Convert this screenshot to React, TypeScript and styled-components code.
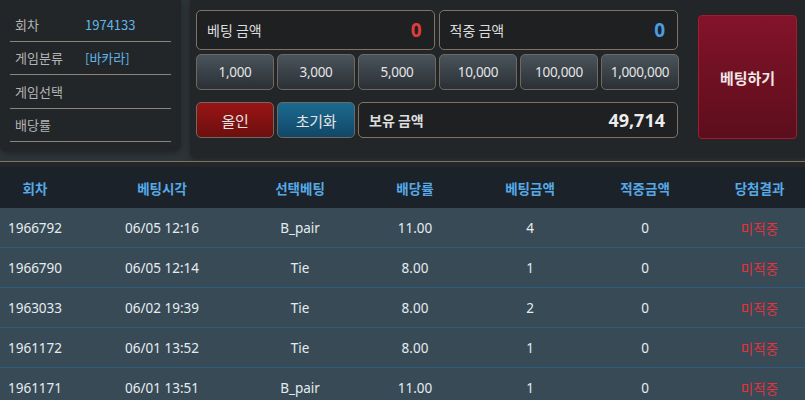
import React from "react";
import styled, { createGlobalStyle } from "styled-components";

const Global = createGlobalStyle`
  html, body { margin: 0; padding: 0; background: #2e3538; }
  body { font-family: "Noto Sans", "Noto Sans CJK KR", sans-serif; }
  * { box-sizing: border-box; }
`;

const Page = styled.div`
  width: 805px;
  height: 400px;
  overflow: hidden;
  background: #2e3538;
  display: flex;
  flex-direction: column;
`;

const Top = styled.div`
  height: 161px;
  flex-shrink: 0;
  display: flex;
  align-items: flex-start;
  gap: 9px;
`;

const InfoPanel = styled.div`
  width: 181px;
  height: 151px;
  background: #232628;
  border-radius: 0 0 6px 6px;
  box-shadow: 0 2px 6px rgba(0, 0, 0, 0.35);
  padding: 8px 10px 0;
  display: flex;
  flex-direction: column;
`;

const InfoRow = styled.div`
  height: 33.5px;
  display: flex;
  align-items: center;
  border-bottom: 1px solid #8a847a;
  font-size: 13px;
  font-family: "Noto Sans CJK KR", "Noto Sans", sans-serif;
`;

const InfoLabel = styled.span`
  width: 75px;
  padding-left: 5px;
  color: #b4b4b4;
`;

const InfoValue = styled.span`
  color: #5fb6e6;
`;

const BetPanel = styled.div`
  flex: 1;
  height: 158px;
  background: #232628;
  border-radius: 0 0 0 6px;
  box-shadow: 0 2px 6px rgba(0, 0, 0, 0.35);
  padding: 10px 8px 0 6px;
  display: flex;
  gap: 19px;
`;

const Controls = styled.div`
  width: 483px;
  display: flex;
  flex-direction: column;
`;

const Row = styled.div<{ $mt?: number; $h: number }>`
  display: flex;
  gap: 3px;
  height: ${(p) => p.$h}px;
  margin-top: ${(p) => p.$mt ?? 0}px;
`;

const AmountBox = styled.div<{ $w: number }>`
  width: ${(p) => p.$w}px;
  height: 100%;
  border: 1px solid #7d7466;
  border-radius: 5px;
  background: #1e2022;
  display: flex;
  align-items: center;
  justify-content: space-between;
  padding: 0 12px 0 10px;
  margin-right: 1px;
`;

const AmountLabel = styled.span<{ $bold?: boolean }>`
  font-family: "Noto Sans CJK KR", "Noto Sans", sans-serif;
  font-size: 14px;
  color: #dcdcdc;
  font-weight: ${(p) => (p.$bold ? 700 : 400)};
`;

const AmountValue = styled.span<{ $color: string; $size: number }>`
  font-family: "Noto Sans", sans-serif;
  font-weight: 700;
  font-size: ${(p) => p.$size}px;
  color: ${(p) => p.$color};
`;

const Chip = styled.button<{ $variant?: "red" | "blue" }>`
  width: 78px;
  height: 100%;
  border-radius: 5px;
  border: 1px solid #6f695f;
  background: ${(p) =>
    p.$variant === "red"
      ? "linear-gradient(#9a1414, #6c0f0f)"
      : p.$variant === "blue"
      ? "linear-gradient(#1b6a90, #114766)"
      : "linear-gradient(#4a545c, #2a3035)"};
  color: #e4e4e4;
  font-family: "Noto Sans", "Noto Sans CJK KR", sans-serif;
  font-size: ${(p) => (p.$variant ? 15 : 13.5)}px;
  letter-spacing: -0.3px;
  padding: 0;
  cursor: pointer;
`;

const BetButton = styled.button`
  margin-top: 5px;
  width: 99px;
  height: 124px;
  border-radius: 4px;
  border: 1px solid #a31b2c;
  background: linear-gradient(#83132a, #5c0e1c);
  color: #f3e6e6;
  font-family: "Noto Sans CJK KR", sans-serif;
  font-weight: 700;
  font-size: 15px;
  cursor: pointer;
`;

const TableWrap = styled.div`
  flex: 1;
  border-top: 1px solid #7a746a;
  background: #252628;
  padding-top: 5px;
`;

const cols = "70px 184px 92px 138px 92px 138px 1fr";

const HeadRow = styled.div`
  display: grid;
  grid-template-columns: ${cols};
  height: 41px;
  align-items: center;
  background: #1c2229;
`;

const HeadCell = styled.div`
  text-align: center;
  font-family: "Noto Sans CJK KR", sans-serif;
  font-weight: 700;
  font-size: 13.5px;
  color: #56a9e6;
`;

const DataRow = styled.div`
  display: grid;
  grid-template-columns: ${cols};
  height: 40px;
  align-items: center;
  background: #384a55;
  border-bottom: 1px solid #2d5d7e;
`;

const Cell = styled.div<{ $red?: boolean }>`
  text-align: center;
  font-family: ${(p) => (p.$red ? '"Noto Sans CJK KR", sans-serif' : '"Noto Sans", sans-serif')};
  font-size: 13.5px;
  color: ${(p) => (p.$red ? "#e2333f" : "#e4ecf2")};
`;

const heads = ["회차", "베팅시각", "선택베팅", "배당률", "베팅금액", "적중금액", "당첨결과"];
const rows = [
  ["1966792", "06/05 12:16", "B_pair", "11.00", "4", "0"],
  ["1966790", "06/05 12:14", "Tie", "8.00", "1", "0"],
  ["1963033", "06/02 19:39", "Tie", "8.00", "2", "0"],
  ["1961172", "06/01 13:52", "Tie", "8.00", "1", "0"],
  ["1961171", "06/01 13:51", "B_pair", "11.00", "1", "0"],
];
const chips = ["1,000", "3,000", "5,000", "10,000", "100,000", "1,000,000"];

export default function App() {
  return (
    <Page>
      <Global />
      <Top>
        <InfoPanel>
          <InfoRow>
            <InfoLabel>회차</InfoLabel>
            <InfoValue>1974133</InfoValue>
          </InfoRow>
          <InfoRow>
            <InfoLabel>게임분류</InfoLabel>
            <InfoValue>[바카라]</InfoValue>
          </InfoRow>
          <InfoRow>
            <InfoLabel>게임선택</InfoLabel>
          </InfoRow>
          <InfoRow>
            <InfoLabel>배당률</InfoLabel>
          </InfoRow>
        </InfoPanel>
        <BetPanel>
          <Controls>
            <Row $h={40}>
              <AmountBox $w={239}>
                <AmountLabel>베팅 금액</AmountLabel>
                <AmountValue $color="#e03c3c" $size={19}>0</AmountValue>
              </AmountBox>
              <AmountBox $w={240}>
                <AmountLabel>적중 금액</AmountLabel>
                <AmountValue $color="#4a9be0" $size={19}>0</AmountValue>
              </AmountBox>
            </Row>
            <Row $h={36} $mt={4}>
              {chips.map((c) => (
                <Chip key={c}>{c}</Chip>
              ))}
            </Row>
            <Row $h={36} $mt={12}>
              <Chip $variant="red">올인</Chip>
              <Chip $variant="blue">초기화</Chip>
              <AmountBox $w={320}>
                <AmountLabel $bold>보유 금액</AmountLabel>
                <AmountValue $color="#ececec" $size={18}>49,714</AmountValue>
              </AmountBox>
            </Row>
          </Controls>
          <BetButton>베팅하기</BetButton>
        </BetPanel>
      </Top>
      <TableWrap>
        <HeadRow>
          {heads.map((h) => (
            <HeadCell key={h}>{h}</HeadCell>
          ))}
        </HeadRow>
        {rows.map((r) => (
          <DataRow key={r[0]}>
            {r.map((c, i) => (
              <Cell key={i}>{c}</Cell>
            ))}
            <Cell $red>미적중</Cell>
          </DataRow>
        ))}
      </TableWrap>
    </Page>
  );
}
